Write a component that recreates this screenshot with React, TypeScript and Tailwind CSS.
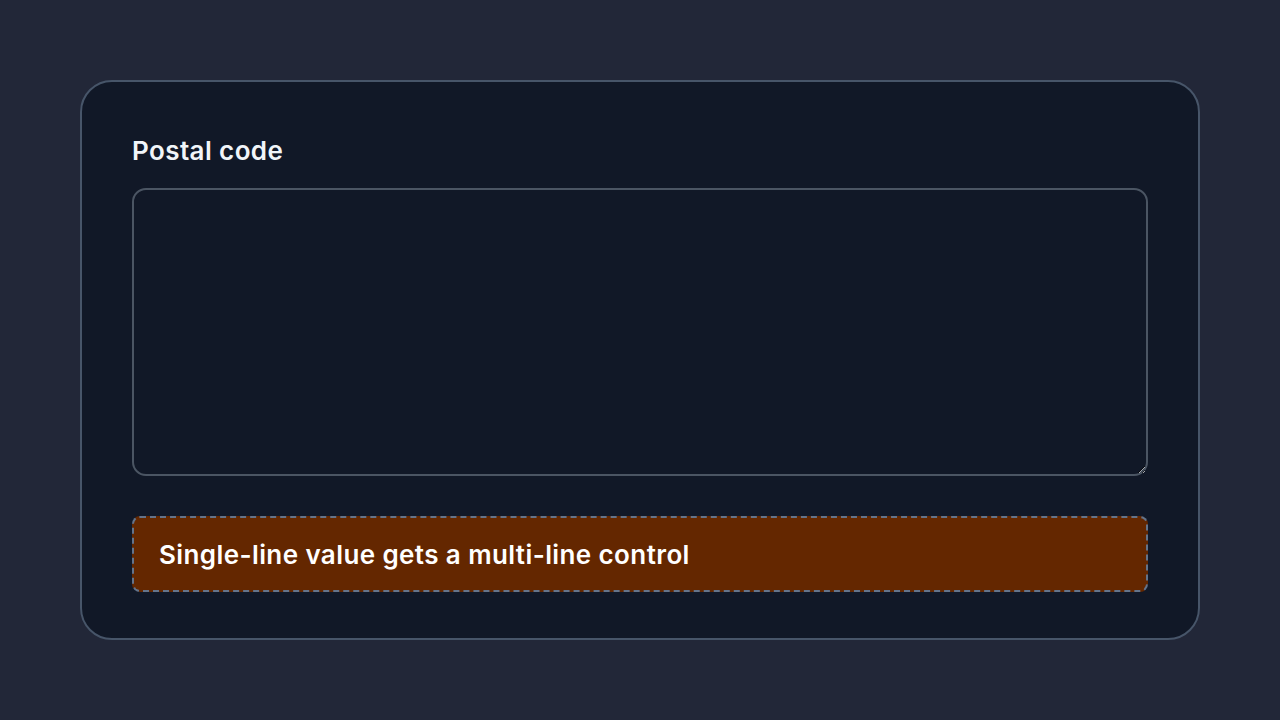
export default function App() {
  return (
    <div className="min-h-screen w-full bg-[#222738] flex items-start justify-center pt-20 font-['Inter','Noto_Sans',sans-serif]">
      <div className="w-[1120px] rounded-[32px] border-2 border-[#475569] bg-[#111827] px-[50px] pt-[51px] pb-[46px]">
        <label htmlFor="postal" className="block text-[26px] leading-[36px] font-semibold tracking-[0.4px] text-[#f1f5f9]">
          Postal code
        </label>
        <textarea
          id="postal"
          className="mt-[19px] block h-[288px] w-full rounded-[14px] border-2 border-[#4b5563] bg-[#111827] text-white outline-none"
        />
        <div className="mt-[40px] flex h-[76px] items-center rounded-[8px] border-2 border-dashed border-[#64748b] bg-[#642700] px-[25px]">
          <span className="text-[26px] font-semibold tracking-[0.4px] text-white">Single-line value gets a multi-line control</span>
        </div>
      </div>
    </div>
  );
}
